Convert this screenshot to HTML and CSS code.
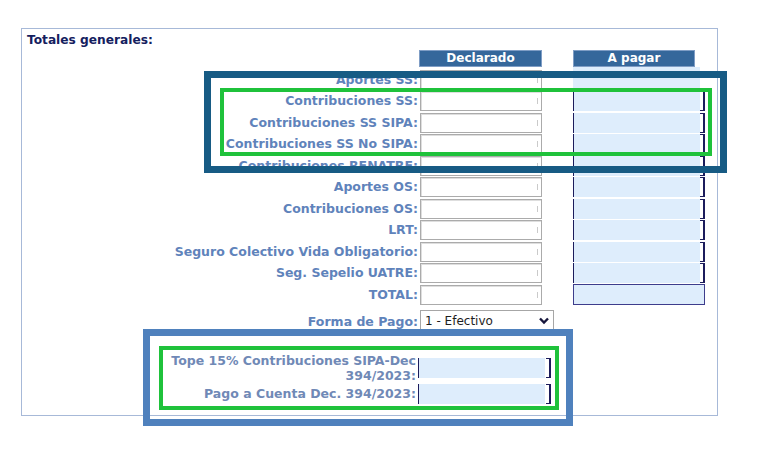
FILE: index.html
```html
<!DOCTYPE html>
<html>
<head>
	<title>Totales generales</title>
	<link rel="stylesheet" href="styles.css">
</head>
<body>
<div class="totales">
	<p class="titulo">Totales generales:</p>
	<div class="grilla">
		<div></div>
		<div class="encabezado">Declarado</div>
		<div class="encabezado enc_pagar">A pagar</div>

		<label>Aportes SS:</label>
		<input class="declarado" type="text">
		<div class="pagar_vacio"></div>

		<label>Contribuciones SS:</label>
		<input class="declarado" type="text">
		<input class="pagar" type="text" readonly>

		<label>Contribuciones SS SIPA:</label>
		<input class="declarado" type="text">
		<input class="pagar" type="text" readonly>

		<label>Contribuciones SS No SIPA:</label>
		<input class="declarado" type="text">
		<input class="pagar" type="text" readonly>

		<label>Contribuciones RENATRE:</label>
		<input class="declarado" type="text">
		<input class="pagar" type="text" readonly>

		<label>Aportes OS:</label>
		<input class="declarado" type="text">
		<input class="pagar" type="text" readonly>

		<label>Contribuciones OS:</label>
		<input class="declarado" type="text">
		<input class="pagar" type="text" readonly>

		<label>LRT:</label>
		<input class="declarado" type="text">
		<input class="pagar" type="text" readonly>

		<label>Seguro Colectivo Vida Obligatorio:</label>
		<input class="declarado" type="text">
		<input class="pagar" type="text" readonly>

		<label>Seg. Sepelio UATRE:</label>
		<input class="declarado" type="text">
		<input class="pagar" type="text" readonly>

		<label>TOTAL:</label>
		<input class="declarado" type="text">
		<input class="pagar_total" type="text" readonly>

		<label class="lbl_forma">Forma de Pago:</label>
		<div class="forma">
			<select>
				<option>1 - Efectivo</option>
			</select>
			<svg class="flecha" width="10" height="8" viewBox="0 0 10 8">
				<polyline points="1,1.5 5,5.5 9,1.5" fill="none" stroke="#16163c" stroke-width="2.4"/>
			</svg>
		</div>
		<div></div>
	</div>
	<div class="decreto">
		<label>Tope 15% Contribuciones SIPA-Dec 394/2023:</label>
		<input class="pagar dec_input" type="text" readonly>
		<label>Pago a Cuenta Dec. 394/2023:</label>
		<input class="pagar dec_input" type="text" readonly>
	</div>
</div>

<div class="marco marco_ss"></div>
<div class="marco marco_sipa"></div>
<div class="marco marco_dec"></div>
<div class="marco marco_pago"></div>
</body>
</html>
```

FILE: styles.css
```css
body {
	margin: 0;
	background: #fff;
	font-family: "DejaVu Sans", Verdana, sans-serif;
}
.totales {
	box-sizing: border-box;
	width: 697px;
	height: 388px;
	margin: 28px 0 0 21px;
	border: 1px solid #a7b9d8;
}
.titulo {
	box-sizing: border-box;
	height: 21px;
	margin: 0;
	padding: 4px 0 0 5px;
	font-size: 12.2px;
	font-weight: bold;
	line-height: 15px;
	color: #14205e;
}
.grilla {
	display: grid;
	grid-template-columns: 398px 153px 132px;
	grid-template-rows: 19px repeat(11, 21.5px) 26px;
}
.grilla label {
	align-self: center;
	padding-right: 2px;
	text-align: right;
	white-space: nowrap;
	font-size: 12.5px;
	font-weight: bold;
	line-height: 14px;
	color: #5f83bb;
}
.encabezado {
	width: 123px;
	height: 17px;
	margin-left: -1px;
	background: #35679b;
	box-shadow: inset 0 0 0 1px #7f9dc5;
	color: #fff;
	font-size: 12px;
	font-weight: bold;
	line-height: 17px;
	text-align: center;
}
.enc_pagar {
	width: 122px;
	margin-left: 0;
}
.declarado {
	box-sizing: border-box;
	width: 122px;
	height: 20px;
	margin: 0;
	align-self: center;
	border: 1px solid #ababab;
	box-shadow: inset 1px 1px 0 #dedede;
	background: #fff linear-gradient(#cacaca, #cacaca) no-repeat right 3px center / 1px 6px;
}
.pagar_vacio {
	width: 127px;
	margin-top: -2px;
	background: #deedfc;
}
.pagar {
	box-sizing: border-box;
	width: 132px;
	height: 20px;
	margin: 0;
	align-self: center;
	border: 0;
	border-left: 1px solid #1c1c5c;
	border-right: 2px solid #1c1c5c;
	background:
		linear-gradient(#1c1c5c, #1c1c5c) no-repeat right top / 3px 1px,
		linear-gradient(#1c1c5c, #1c1c5c) no-repeat right bottom / 3px 1px,
		linear-gradient(to right, #deedfc 126px, #fff 126px);
}
.pagar_total {
	box-sizing: border-box;
	width: 132px;
	height: 21px;
	margin: 0;
	align-self: center;
	border: 1px solid #3d3d8c;
	background: #deedfc;
}
.grilla .lbl_forma {
	padding-top: 6px;
}
.forma {
	position: relative;
	width: 134px;
	height: 22px;
	margin-top: 4px;
}
.forma select {
	appearance: none;
	box-sizing: border-box;
	width: 100%;
	height: 100%;
	margin: 0;
	padding: 0 0 0 4px;
	border: 1px solid #a6a6a6;
	border-radius: 0;
	background: #fff;
	color: #1e1e1e;
	font-family: "DejaVu Sans", Verdana, sans-serif;
	font-size: 12px;
}
.flecha {
	position: absolute;
	right: 5px;
	top: 7px;
}
.decreto {
	display: grid;
	grid-template-columns: 254px 134px;
	row-gap: 1px;
	align-items: center;
	margin: 21px 0 0 142px;
}
.decreto label {
	padding-right: 2px;
	text-align: right;
	font-size: 12.5px;
	font-weight: bold;
	line-height: 15px;
	color: #7089b6;
}
.dec_input {
	width: 133px;
	background:
		linear-gradient(#1c1c5c, #1c1c5c) no-repeat right top / 3px 1px,
		linear-gradient(#1c1c5c, #1c1c5c) no-repeat right bottom / 3px 1px,
		linear-gradient(to right, #deedfc 126px, #fff 126px);
}
.marco {
	position: absolute;
	box-sizing: border-box;
	pointer-events: none;
}
.marco_ss {
	left: 204px;
	top: 71px;
	width: 523px;
	height: 102px;
	border: 7px solid #175b84;
}
.marco_sipa {
	left: 220px;
	top: 88px;
	width: 492px;
	height: 68px;
	border: 4px solid #1fc23b;
}
.marco_dec {
	left: 143px;
	top: 329px;
	width: 430px;
	height: 97px;
	border: 7px solid #4f81bd;
}
.marco_pago {
	left: 159px;
	top: 346px;
	width: 400px;
	height: 64px;
	border: 4px solid #1fc23b;
}
```
